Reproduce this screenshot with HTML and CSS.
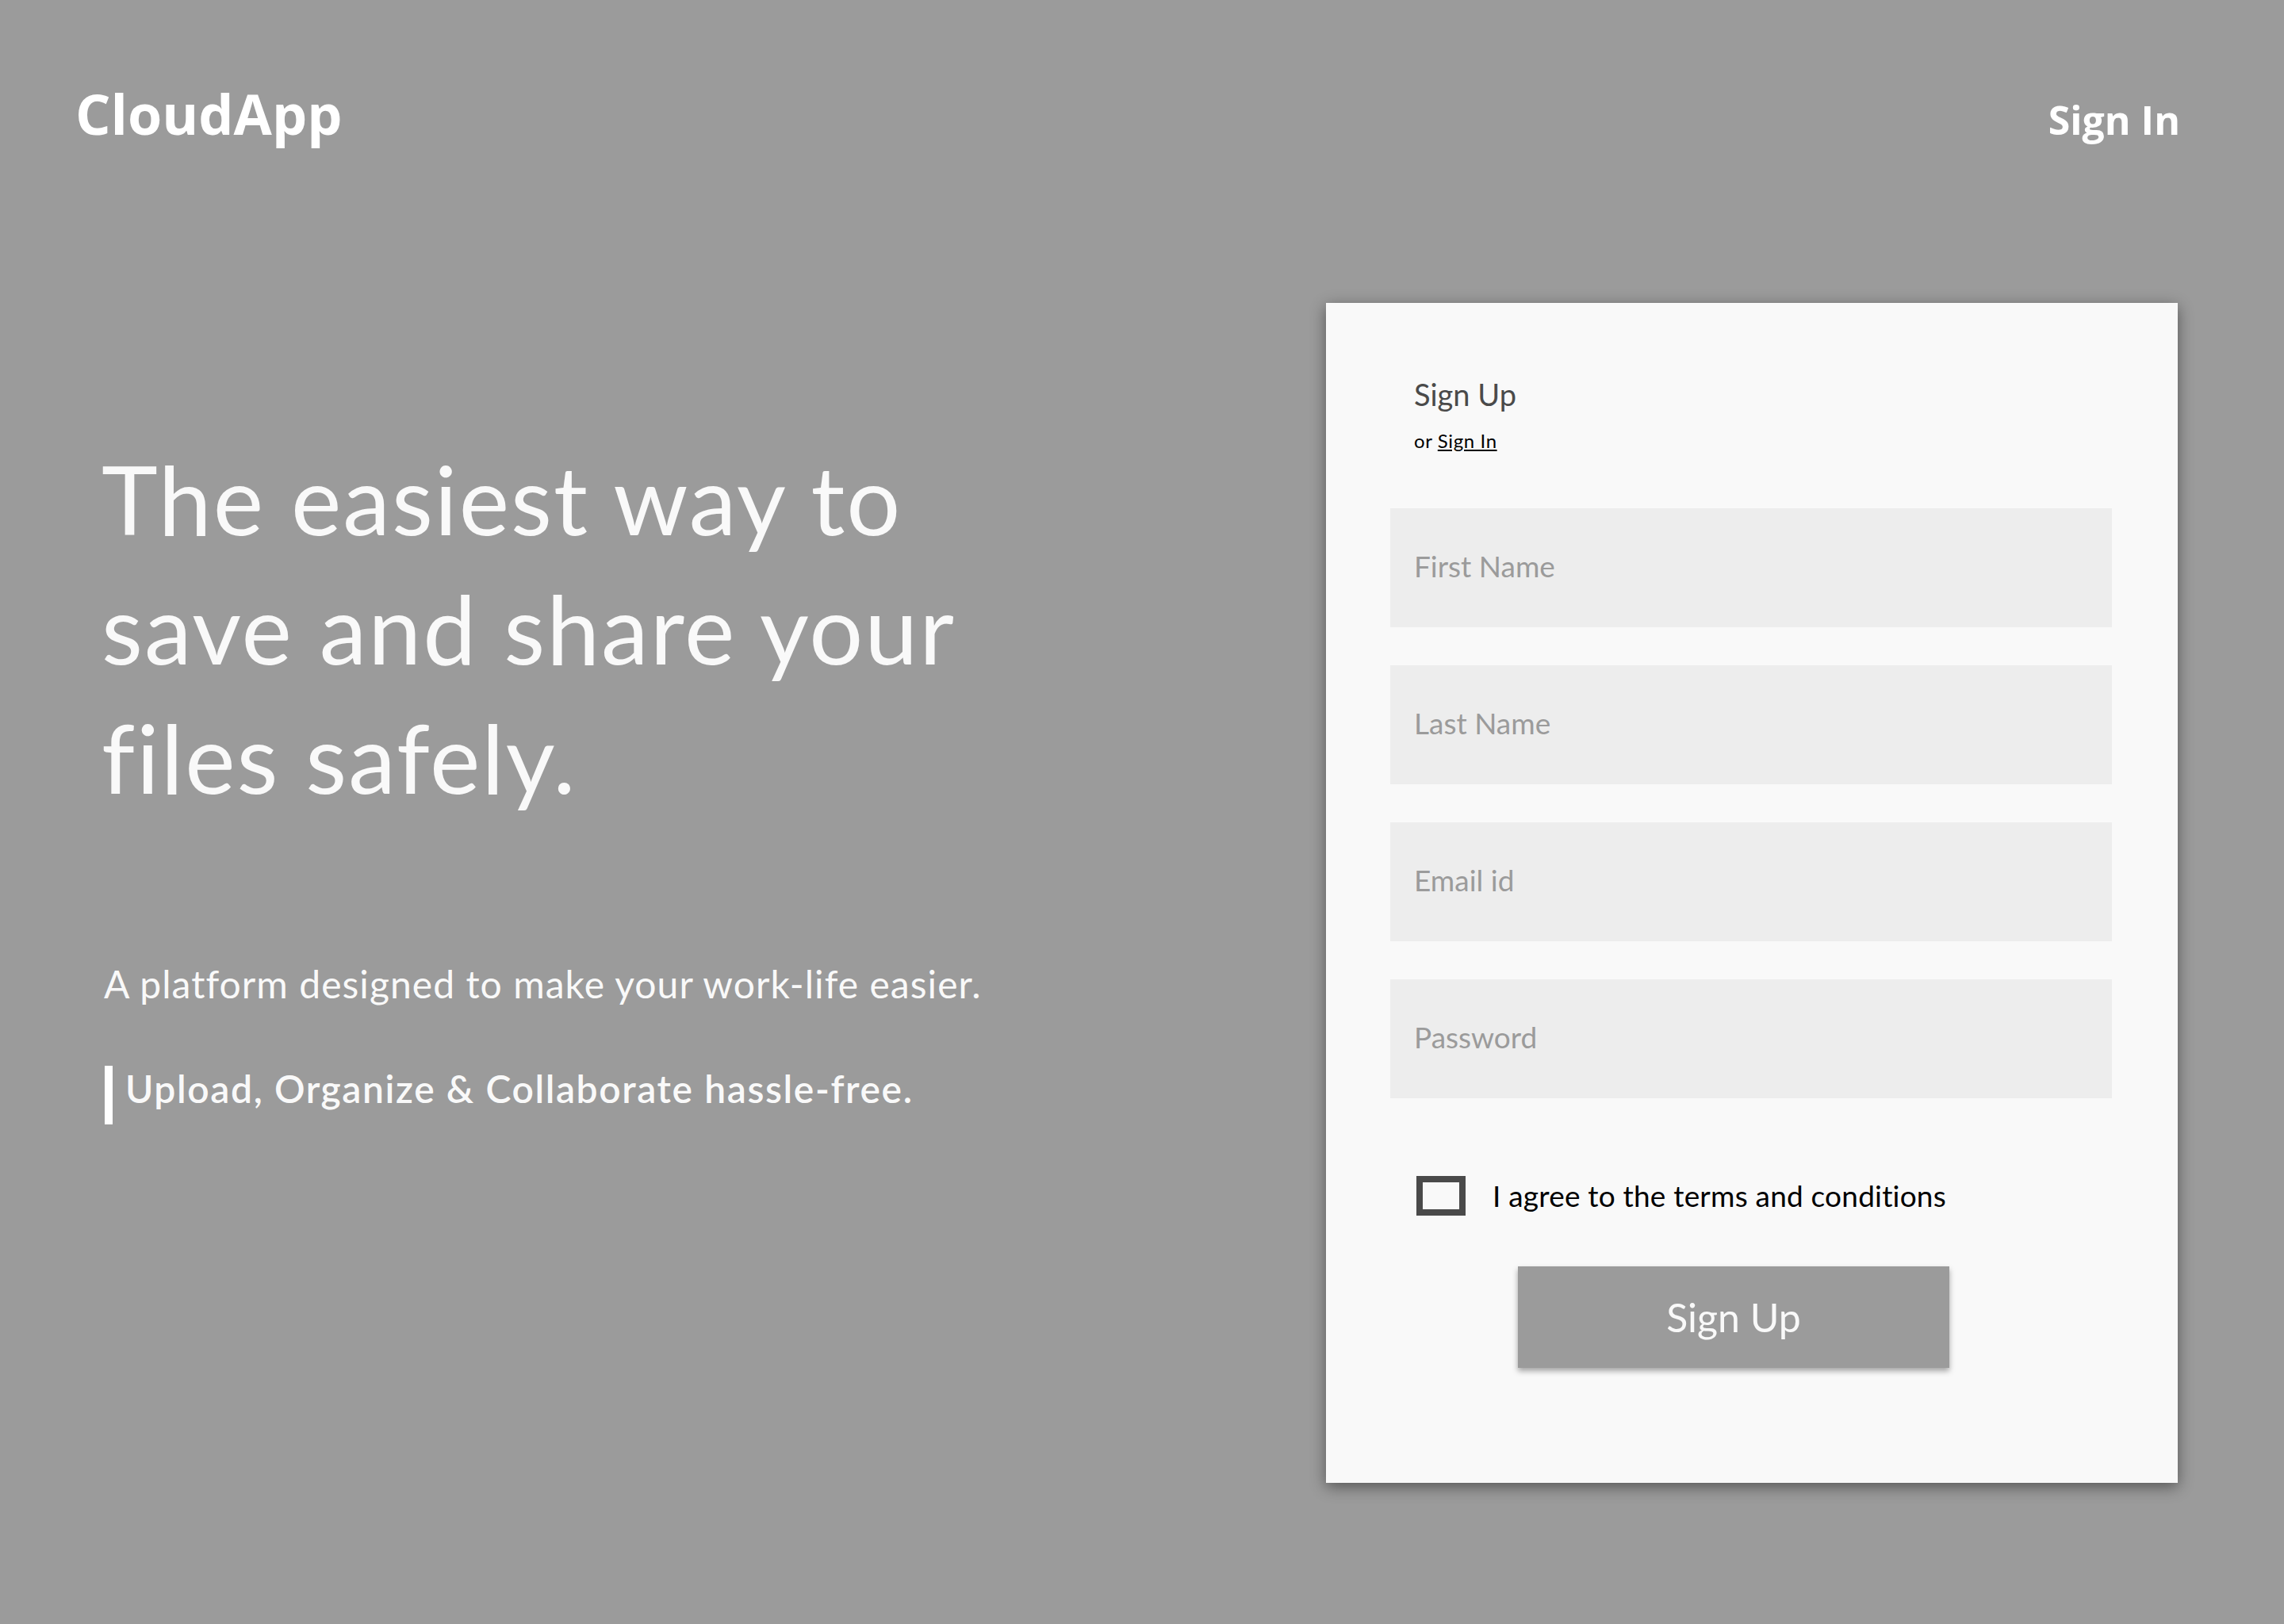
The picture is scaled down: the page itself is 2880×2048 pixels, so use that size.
FILE: index.html
```html
<!DOCTYPE html>
<html lang="en">
<head>
<meta charset="utf-8">
<title>CloudApp – Sign Up</title>
<link rel="stylesheet" href="styles.css">
</head>
<body>
<header class="topbar">
  <div class="logo">CloudApp</div>
  <a class="top-signin" href="#">Sign In</a>
</header>
<main class="main">
  <section class="hero">
    <h1 class="hero-title">The easiest way to<br>save and share your<br>files safely.</h1>
    <p class="hero-sub">A platform designed to make your work-life easier.</p>
    <p class="hero-tag">Upload, Organize &amp; Collaborate hassle-free.</p>
  </section>
  <section class="card">
    <div class="card-head">
      <h2 class="card-title">Sign Up</h2>
      <p class="card-alt">or <a href="#">Sign In</a></p>
    </div>
    <form class="form">
      <input class="field" type="text" placeholder="First Name">
      <input class="field" type="text" placeholder="Last Name">
      <input class="field" type="email" placeholder="Email id">
      <input class="field" type="password" placeholder="Password">
      <label class="agree"><span class="check"></span><span class="agree-text">I agree to the terms and conditions</span></label>
      <button class="submit" type="button">Sign Up</button>
    </form>
  </section>
</main>
</body>
</html>
```

FILE: styles.css
```css
html, body {
  margin: 0;
  padding: 0;
}
body {
  background: #9b9b9b;
  min-height: 2048px;
  font-family: "Lato", "Noto Sans", sans-serif;
  color: #f9f9f9;
}
.topbar {
  display: flex;
  justify-content: space-between;
  align-items: baseline;
  padding: 108px 131px 0 95px;
}
.logo {
  font-family: "Open Sans", "Noto Sans", sans-serif;
  font-weight: 700;
  font-size: 70px;
  line-height: 1;
  color: #fff;
}
.top-signin {
  font-family: "Open Sans", "Noto Sans", sans-serif;
  font-weight: 700;
  font-size: 50px;
  line-height: 1;
  color: #fff;
  text-decoration: none;
}
.main {
  display: flex;
  justify-content: space-between;
  align-items: flex-start;
  padding: 0 134px 0 128px;
  margin-top: 204px;
}
.hero {
  padding-top: 166px;
}
.hero-title {
  margin: 0;
  font-weight: 400;
  font-size: 120px;
  line-height: 163px;
  letter-spacing: 2px;
  color: #f9f9f9;
}
.hero-sub {
  margin: 175px 0 0 3px;
  font-size: 48px;
  line-height: 58px;
  letter-spacing: 1.05px;
  color: #f9f9f9;
}
.hero-tag {
  margin: 74px 0 0 4px;
  border-left: 10px solid #fff;
  padding: 0 0 16px 16px;
  font-size: 48px;
  line-height: 58px;
  font-weight: 600;
  letter-spacing: 1.6px;
  color: #f9f9f9;
}
.card {
  width: 1074px;
  height: 1488px;
  box-sizing: border-box;
  background: #f9f9f9;
  box-shadow: 0 5px 18px rgba(0, 0, 0, 0.45);
  padding-top: 92px;
}
.card-head {
  padding-left: 111px;
}
.card-title {
  margin: 0;
  font-weight: 400;
  font-size: 38px;
  line-height: 46px;
  color: #4a4a4a;
}
.card-alt {
  margin: 21px 0 0;
  font-size: 24px;
  line-height: 30px;
  letter-spacing: 0.6px;
  color: #000;
}
.card-alt a {
  color: #000;
  text-decoration: underline;
}
.form {
  display: flex;
  flex-direction: column;
  align-items: flex-start;
  gap: 48px;
  padding-left: 81px;
  margin-top: 70px;
}
.field {
  width: 910px;
  height: 150px;
  box-sizing: border-box;
  border: none;
  outline: none;
  background: #ededed;
  padding: 0 0 6px 30px;
  margin: 0;
  font-family: "Lato", "Noto Sans", sans-serif;
  font-size: 37px;
  color: #4a4a4a;
}
.field::placeholder {
  color: #9b9b9b;
  opacity: 1;
}
.agree {
  display: flex;
  align-items: center;
  margin-top: 50px;
  margin-left: 33px;
}
.check {
  width: 62px;
  height: 50px;
  box-sizing: border-box;
  border: 8px solid #4a4a4a;
  background: #f9f9f9;
}
.agree-text {
  margin-left: 34px;
  font-size: 37px;
  line-height: 50px;
  letter-spacing: 0.2px;
  color: #000;
}
.submit {
  margin: 16px 0 0 161px;
  width: 544px;
  height: 128px;
  border: none;
  background: #9b9b9b;
  color: #f9f9f9;
  font-family: "Lato", "Noto Sans", sans-serif;
  font-size: 50px;
  box-shadow: 0 4px 7px rgba(0, 0, 0, 0.35);
}
```
